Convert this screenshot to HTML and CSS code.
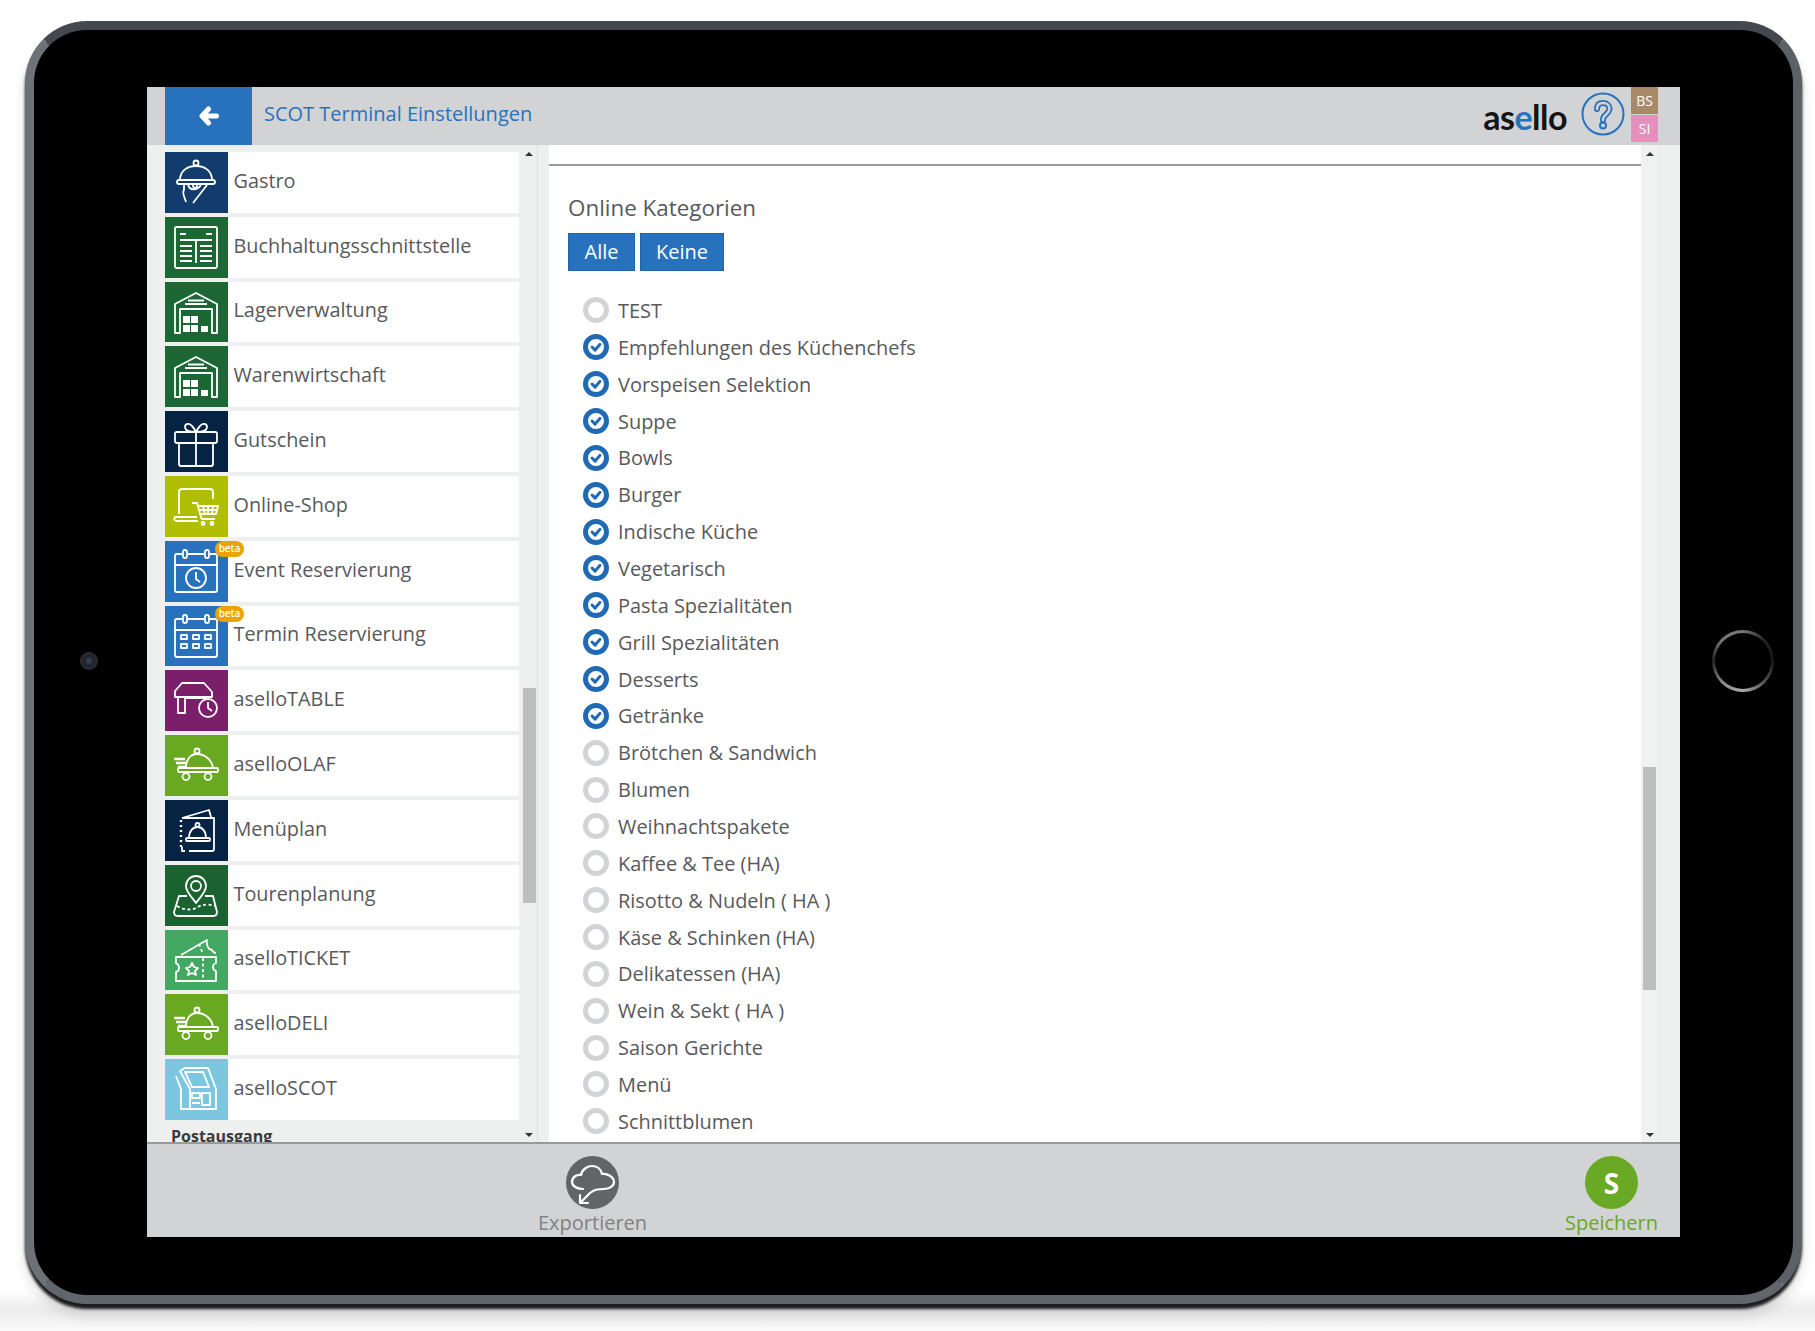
FILE: index.html
```html
<!DOCTYPE html>
<html lang="de">
<head>
  <meta charset="UTF-8" />
  <title>SCOT Terminal Einstellungen</title>
  <link rel="stylesheet" href="styles.css">
</head>
<body>

  <svg class="defs" width="0" height="0">
    <symbol id="warehouse" viewBox="0 0 63 61">
      <path d="M10 51V22L31 11L52 22V51H47V27H15V51Z" />
      <path d="M23 18.500H39M20 22H42" />
      <path class="solid" d="M18 34h7v7h-7zM26 34h7v7h-7zM18 43h7v7h-7zM26 43h7v7h-7zM36 44h7v6h-7z" />
    </symbol>
    <symbol id="delivery" viewBox="0 0 63 61">
      <circle cx="32" cy="16" r="2.500" />
      <path d="M21 33C21 25 25 19 32 19C40 19 47 25 48 33" />
      <rect x="13" y="33" width="40" height="4" rx="1" />
      <path d="M21 37V38M43 37V38" />
      <circle cx="21" cy="41.500" r="3.500" />
      <circle cx="43" cy="41.500" r="3.500" />
      <path class="thick" d="M9 24H20M11 28H21M13 32H21" />
    </symbol>
    <symbol id="calendar" viewBox="0 0 63 61">
      <path d="M17 13H12Q10 13 10 15V49Q10 51 12 51H50Q52 51 52 49V15Q52 13 50 13H45M23 13H39M10 24H52" />
      <rect x="18" y="9" width="4" height="8" rx="2" />
      <rect x="40" y="9" width="4" height="8" rx="2" />
    </symbol>
  </svg>

  <div class="tablet">
    <span class="camera"></span>
    <span class="home-button"></span>

    <div class="screen">
      <header class="topbar">
        <a class="back">
          <svg width="22" height="20" viewBox="0 0 22 20"><path d="M10.500 3L4 10L10.500 17M5 10H18.500" /></svg>
        </a>
        <div class="page-title">SCOT Terminal Einstellungen</div>
        <div class="logo">as<span class="logo-e">e</span>llo</div>
        <svg class="help" width="44" height="44" viewBox="0 0 44 44">
          <circle class="help-ring" cx="22" cy="22" r="20.500" />
          <path class="help-out" d="M16 17C16 12.500 18.500 11 22 11C26 11 28.500 13.500 28.500 16.500C28.500 19.500 26.500 21 25 22.500C23 24 22 25.500 22 28" />
          <path class="help-in" d="M16 17C16 12.500 18.500 11 22 11C26 11 28.500 13.500 28.500 16.500C28.500 19.500 26.500 21 25 22.500C23 24 22 25.500 22 28" />
          <circle class="help-dot" cx="22" cy="33.500" r="3" />
        </svg>
        <div class="users">
          <span class="user user-bs">BS</span>
          <span class="user user-si">SI</span>
        </div>
      </header>

      <div class="middle">
        <aside class="sidebar">
          <div class="menu">
            <div class="row">
              <span class="tile navy">
                <svg viewBox="0 0 63 61">
                  <circle cx="31" cy="11" r="2.500" />
                  <path d="M15 28C15 19 22 14 31 14C40 14 47 19 47 28" />
                  <rect x="12" y="28" width="38" height="4" rx="2" />
                  <path d="M19 32V38C17 40 19 44 20 47L21 50M42 33L28 51M23 32C24 39 32 39 36 33M28 33C28 37 32 37 32 33" />
                </svg>
              </span>
              Gastro
            </div>
            <div class="row">
              <span class="tile green">
                <svg viewBox="0 0 63 61">
                  <rect x="10" y="10" width="42" height="41" rx="1.500" />
                  <path d="M15 17H21M41 17H47M15 23H47M31 23V46M15 29H27M35 29H47M15 34H27M35 34H47M15 39H27M35 39H47M15 44H27M35 44H47" />
                </svg>
              </span>
              Buchhaltungsschnittstelle
            </div>
            <div class="row">
              <span class="tile green"><svg viewBox="0 0 63 61"><use href="#warehouse" /></svg></span>
              Lagerverwaltung
            </div>
            <div class="row">
              <span class="tile green"><svg viewBox="0 0 63 61"><use href="#warehouse" /></svg></span>
              Warenwirtschaft
            </div>
            <div class="row">
              <span class="tile midnight">
                <svg viewBox="0 0 63 61">
                  <rect x="10" y="21" width="42" height="11" rx="2" />
                  <path d="M14 32V53Q14 55 16 55H46Q48 55 48 53V32M31 21V55" />
                  <path d="M31 21C26 21 20 20 20 16C20 12 25 12 27 15C29 17 30 19 31 21C32 19 33 17 35 15C37 12 42 12 42 16C42 20 36 21 31 21Z" />
                </svg>
              </span>
              Gutschein
            </div>
            <div class="row">
              <span class="tile lime">
                <svg viewBox="0 0 63 61">
                  <path d="M14 38V16Q14 13 17 13H45Q48 13 48 16V23M32 41H11Q9 41 9.500 43.500Q10 45 12 45H33" />
                  <path d="M27 27H32L36 41Q36 43 38 43H50M33.500 30H53L51 38H36M38 30L40 38M43 30V38M48 30L47 38M35 34H52" />
                  <circle cx="38" cy="47.500" r="1.500" />
                  <circle cx="47" cy="47.500" r="1.500" />
                </svg>
              </span>
              Online-Shop
            </div>
            <div class="row">
              <span class="tile blue">
                <svg viewBox="0 0 63 61">
                  <use href="#calendar" />
                  <circle cx="31" cy="37" r="10" />
                  <path d="M31 31V38L35 41" />
                </svg>
              </span>
              Event Reservierung
              <span class="beta">beta</span>
            </div>
            <div class="row">
              <span class="tile blue">
                <svg viewBox="0 0 63 61">
                  <use href="#calendar" />
                  <path d="M16 29h6v4h-6zM28 29h6v4h-6zM40 29h6v4h-6zM16 38h6v4h-6zM28 38h6v4h-6zM40 38h6v4h-6z" />
                </svg>
              </span>
              Termin Reservierung
              <span class="beta">beta</span>
            </div>
            <div class="row">
              <span class="tile purple">
                <svg viewBox="0 0 63 61">
                  <path d="M17 13H39L47 22V27H10V21ZM13 27V43H20V28M20 28H41" />
                  <circle cx="43" cy="38" r="9" />
                  <path d="M43 32V38L47 41" />
                </svg>
              </span>
              aselloTABLE
            </div>
            <div class="row">
              <span class="tile grass"><svg viewBox="0 0 63 61"><use href="#delivery" /></svg></span>
              aselloOLAF
            </div>
            <div class="row">
              <span class="tile midnight">
                <svg viewBox="0 0 63 61">
                  <path d="M17 18H49V49Q49 51 47 51H24M20 51H17V47M17 18L44 10L46 17" />
                  <path d="M16 20v2M16 25v2M16 30v2M16 35v2M16 40v2M16 45v2" class="thick" />
                  <circle cx="32.500" cy="25" r="2" />
                  <path d="M24 38C24 31 28 27 32.500 27C37 27 41 31 41 38" />
                  <rect x="21" y="38" width="24" height="3" rx="1" />
                </svg>
              </span>
              Menüplan
            </div>
            <div class="row">
              <span class="tile forest">
                <svg viewBox="0 0 63 61">
                  <path d="M31 38C26 31 21 27 21 21A10 10 0 0 1 41 21C41 27 36 31 31 38Z" />
                  <circle cx="31" cy="21" r="5" />
                  <path d="M22 31H14L9 47Q9 51 13 51H48Q52 51 52 47L48 31H40" />
                  <path class="dash" d="M12 41C20 46 28 45 33 42C38 39 44 39 50 41" />
                </svg>
              </span>
              Tourenplanung
            </div>
            <div class="row">
              <span class="tile mint">
                <svg viewBox="0 0 63 61">
                  <path d="M11 27H51V33C47 34 47 40 51 41V51H11V42C15 41 15 35 11 33Z" />
                  <path d="M16 25L42 10C41 14 43 20 47 20C48 22 50 23 51 23" />
                  <path class="dash" d="M38 28V50M34 14L38 24" />
                  <path d="M27 33L29 37L33 38L30 41L31 45L27 43L23 45L24 41L21 38L25 37Z" />
                </svg>
              </span>
              aselloTICKET
            </div>
            <div class="row">
              <span class="tile grass"><svg viewBox="0 0 63 61"><use href="#delivery" /></svg></span>
              aselloDELI
            </div>
            <div class="row">
              <span class="tile sky">
                <svg viewBox="0 0 63 61">
                  <path d="M11 17L16 30V50H51V30L43 9H20L15 12L25 30V50" />
                  <path d="M20 13H38L44 28H27Z" />
                  <path d="M27 34h8v5h-8zM37 34h8v12h-8zM27 44H35" />
                </svg>
              </span>
              aselloSCOT
            </div>
            <div class="menu-section">Postausgang</div>
          </div>
          <div class="scroll menu-scroll">
            <span class="arrow-up"></span>
            <span class="thumb"></span>
            <span class="arrow-down"></span>
          </div>
        </aside>
        <div class="gutter"></div>

        <main class="main">
          <hr class="rule">
          <h2 class="section-title">Online Kategorien</h2>
          <div class="buttons">
            <button class="btn btn-all">Alle</button>
            <button class="btn">Keine</button>
          </div>
          <ul class="categories">
            <li><span class="radio"></span>TEST</li>
            <li><span class="radio checked"><svg viewBox="0 0 16 16"><path d="M3.500 8L7 11.500L12.500 5" /></svg></span>Empfehlungen des Küchenchefs</li>
            <li><span class="radio checked"><svg viewBox="0 0 16 16"><path d="M3.500 8L7 11.500L12.500 5" /></svg></span>Vorspeisen Selektion</li>
            <li><span class="radio checked"><svg viewBox="0 0 16 16"><path d="M3.500 8L7 11.500L12.500 5" /></svg></span>Suppe</li>
            <li><span class="radio checked"><svg viewBox="0 0 16 16"><path d="M3.500 8L7 11.500L12.500 5" /></svg></span>Bowls</li>
            <li><span class="radio checked"><svg viewBox="0 0 16 16"><path d="M3.500 8L7 11.500L12.500 5" /></svg></span>Burger</li>
            <li><span class="radio checked"><svg viewBox="0 0 16 16"><path d="M3.500 8L7 11.500L12.500 5" /></svg></span>Indische Küche</li>
            <li><span class="radio checked"><svg viewBox="0 0 16 16"><path d="M3.500 8L7 11.500L12.500 5" /></svg></span>Vegetarisch</li>
            <li><span class="radio checked"><svg viewBox="0 0 16 16"><path d="M3.500 8L7 11.500L12.500 5" /></svg></span>Pasta Spezialitäten</li>
            <li><span class="radio checked"><svg viewBox="0 0 16 16"><path d="M3.500 8L7 11.500L12.500 5" /></svg></span>Grill Spezialitäten</li>
            <li><span class="radio checked"><svg viewBox="0 0 16 16"><path d="M3.500 8L7 11.500L12.500 5" /></svg></span>Desserts</li>
            <li><span class="radio checked"><svg viewBox="0 0 16 16"><path d="M3.500 8L7 11.500L12.500 5" /></svg></span>Getränke</li>
            <li><span class="radio"></span>Brötchen &amp; Sandwich</li>
            <li><span class="radio"></span>Blumen</li>
            <li><span class="radio"></span>Weihnachtspakete</li>
            <li><span class="radio"></span>Kaffee &amp; Tee (HA)</li>
            <li><span class="radio"></span>Risotto &amp; Nudeln ( HA )</li>
            <li><span class="radio"></span>Käse &amp; Schinken (HA)</li>
            <li><span class="radio"></span>Delikatessen (HA)</li>
            <li><span class="radio"></span>Wein &amp; Sekt ( HA )</li>
            <li><span class="radio"></span>Saison Gerichte</li>
            <li><span class="radio"></span>Menü</li>
            <li><span class="radio"></span>Schnittblumen</li>
          </ul>
        </main>
        <div class="scroll main-scroll">
          <span class="arrow-up"></span>
          <span class="thumb"></span>
          <span class="arrow-down"></span>
        </div>
      </div>

      <footer class="footer">
        <div class="action action-export">
          <span class="action-icon">
            <svg viewBox="0 0 53 53">
              <path d="M17 33C11 33 6 30 6 26C6 21 11 18 15 19C16 13 22 10 26 10C31 10 35 13 36 18C41 17 48 21 48 26C48 31 42 33 38 33C33 33 29 33 24 37L15 46" />
              <path d="M14 39V47H22" />
            </svg>
          </span>
          Exportieren
        </div>
        <div class="action action-save">
          <span class="action-icon">S</span>
          Speichern
        </div>
      </footer>
    </div>
  </div>

</body>
</html>
```

FILE: styles.css
```css
* {
  box-sizing: border-box;
}
body {
  margin: 0;
  height: 1331px;
  overflow: hidden;
  background: linear-gradient(to bottom, #fff 0, #fff 1290px, #ececec 1310px, #fafafa 1331px);
  font-family: "Open Sans", sans-serif;
  color: #58595b;
}
.defs {
  display: block;
}
.tablet {
  position: relative;
  display: flex;
  width: 1777px;
  height: 1283px;
  margin: 21px 0 0 25px;
  padding: 57px 112px 55px 113px;
  background: #000;
  border: 9px solid #5c6167;
  border-top-color: #45494f;
  border-left-color: #6c7278;
  border-bottom-color: #61666d;
  border-radius: 62px;
  box-shadow: 0 5px 3px #1c1c1c, 0 12px 14px rgba(0,0,0,0.12);
}
.camera {
  position: absolute;
  left: 46px;
  top: 622px;
  width: 18px;
  height: 18px;
  border-radius: 50%;
  background: radial-gradient(circle, #3a4a66 0, #1e2126 40%, #303134 75%, #111 100%);
}
.home-button {
  position: absolute;
  left: 1678px;
  top: 600px;
  width: 62px;
  height: 62px;
  border-radius: 50%;
  background: conic-gradient(#777, #222 45deg, #151515 90deg, #555 135deg, #aaa 180deg, #888 225deg, #222 270deg, #777 315deg, #777);
}
.home-button::after {
  content: "";
  display: block;
  width: 56px;
  height: 56px;
  margin: 3px;
  border-radius: 50%;
  background: #000;
}
.screen {
  display: flex;
  flex-direction: column;
  width: 1533px;
  height: 1150px;
  overflow: hidden;
  background: #d2d3d5;
}

/* top bar */
.topbar {
  display: flex;
  align-items: flex-start;
  flex: none;
  height: 58px;
  padding: 0 22px 0 18px;
  background: #d2d3d5;
}
.back {
  display: flex;
  align-items: center;
  justify-content: center;
  width: 87px;
  height: 58px;
  background: #2872bd;
}
.back svg path {
  fill: none;
  stroke: #fff;
  stroke-width: 5;
  stroke-linejoin: round;
  stroke-linecap: round;
}
.page-title {
  margin-left: 12px;
  line-height: 54px;
  font-size: 20px;
  color: #2872bd;
}
.logo {
  margin-left: auto;
  font-family: Lato, sans-serif;
  font-weight: 700;
  font-size: 34px;
  line-height: 60px;
  color: #151515;
  letter-spacing: -0.5px;
}
.logo-e {
  color: #2872bd;
}
.help {
  margin: 5px 6px 0 14px;
  fill: none;
}
.help-ring {
  stroke: #2872bd;
  stroke-width: 2;
}
.help-out {
  stroke: #2872bd;
  stroke-width: 6;
  stroke-linecap: round;
}
.help-in {
  stroke: #d2d3d5;
  stroke-width: 2.500;
  stroke-linecap: round;
}
.help-dot {
  stroke: #2872bd;
  stroke-width: 2;
}
.users {
  display: flex;
  flex-direction: column;
  gap: 1px;
}
.user {
  width: 27px;
  height: 27px;
  line-height: 27px;
  text-align: center;
  font-size: 14px;
  color: #fff;
}
.user-bs {
  background: #a98a68;
}
.user-si {
  background: #e58fbd;
}

/* middle part */
.middle {
  display: flex;
  flex: none;
  height: 997px;
  overflow: hidden;
}
.sidebar {
  display: flex;
  width: 391px;
  padding-left: 18px;
  background: #eef0ef;
  border-right: 1px solid #dcdedd;
}
.menu {
  width: 354px;
  padding-top: 7px;
}
.row {
  position: relative;
  display: flex;
  align-items: center;
  gap: 5.500px;
  height: 60.8px;
  padding-bottom: 4px;
  margin-bottom: 4px;
  background: #fff;
  font-size: 19.850px;
}
.tile {
  flex: none;
  width: 63px;
  height: 60.8px;
  margin-bottom: -4px;
}
.tile svg {
  display: block;
  width: 63px;
  height: 61px;
}
svg path, svg circle, svg rect {
  fill: none;
}
.tile svg, .defs symbol {
  stroke: #fff;
  stroke-width: 1.800;
  stroke-linejoin: round;
}
.defs .solid {
  fill: #fff;
  stroke: none;
}
.thick {
  stroke-width: 2.400;
}
.dash {
  stroke-dasharray: 3 2.500;
}
.navy { background: #123c6e; }
.green { background: #1d6734; }
.midnight { background: #062344; }
.lime { background: #afbe00; }
.blue { background: #2872bd; }
.purple { background: #7b1f6a; }
.grass { background: #69a922; }
.forest { background: #1a622f; }
.mint { background: #43a862; }
.sky { background: #7cc7df; }
.beta {
  position: absolute;
  left: 50px;
  top: 0;
  width: 29px;
  height: 16px;
  line-height: 14px;
  border-radius: 8px;
  background: #eba300;
  color: #fff;
  text-align: center;
  font-size: 10px;
  font-weight: 600;
}
.menu-section {
  padding: 0 0 0 6px;
  line-height: 24px;
  font-size: 16px;
  font-weight: 700;
  color: #3a3a3c;
}
.scroll {
  position: relative;
  display: flex;
  flex-direction: column;
  align-items: center;
  padding: 7px 0 5px;
}
.menu-scroll {
  width: 18px;
  padding-left: 2px;
}
.arrow-up, .arrow-down {
  display: block;
  width: 0;
  height: 0;
  border-left: 4px solid transparent;
  border-right: 4px solid transparent;
}
.arrow-up {
  border-bottom: 4px solid #333;
}
.arrow-down {
  border-top: 4px solid #333;
  margin-top: auto;
}
.thumb {
  display: block;
  width: 13px;
  background: #bdbdbd;
}
.menu-scroll .thumb {
  height: 215px;
  margin-top: 532px;
}
.gutter {
  width: 11px;
  background: #eef0ef;
}

/* main part */
.main {
  width: 1092px;
  padding: 19px 0 0;
  background: #fff;
}
.rule {
  height: 2px;
  margin: 0;
  border: none;
  background: #97999a;
}
.section-title {
  margin: 27px 0 0 19px;
  font-size: 22.400px;
  line-height: 30px;
  font-weight: 400;
}
.buttons {
  display: flex;
  gap: 5px;
  margin: 10px 0 0 19px;
}
.btn {
  height: 38px;
  padding: 0 15px 2px;
  border: 1px solid #1d65ad;
  background: #2872bd;
  color: #fff;
  font-family: inherit;
  font-size: 20px;
}
.btn-all {
  width: 67px;
}
.categories {
  margin: 21px 0 0;
  padding: 0 0 0 34px;
  list-style: none;
}
.categories li {
  display: flex;
  align-items: center;
  gap: 9px;
  height: 36.860px;
  font-size: 19.950px;
}
.radio {
  flex: none;
  width: 26px;
  height: 26px;
  border: 5px solid #d2d3d5;
  border-radius: 50%;
}
.radio.checked {
  display: flex;
  align-items: center;
  justify-content: center;
  border-color: #2069b4;
}
.radio svg {
  flex: none;
  width: 14px;
  height: 14px;
}
.radio svg path {
  stroke: #2069b4;
  stroke-width: 3.500;
  stroke-linecap: round;
  stroke-linejoin: round;
}
.main-scroll {
  width: 39px;
  align-items: flex-start;
  padding-left: 2px;
  background: linear-gradient(to right, #f1f1f1 17px, #eef0ef 17px);
}
.main-scroll .arrow-up, .main-scroll .arrow-down {
  margin-left: 3px;
}
.main-scroll .thumb {
  height: 223px;
  margin-top: 611px;
}
.main-scroll .arrow-down {
  margin-top: auto;
}

/* footer */
.footer {
  display: flex;
  flex: none;
  justify-content: space-between;
  height: 95px;
  padding: 12px 22px 0 391px;
  border-top: 2px solid #97999a;
}
.action {
  display: flex;
  flex-direction: column;
  align-items: center;
  font-size: 20px;
  line-height: 28px;
}
.action-icon {
  display: flex;
  align-items: center;
  justify-content: center;
  width: 53px;
  height: 53px;
  border-radius: 50%;
  color: #fff;
  font-size: 28px;
  font-weight: 700;
}
.action-export {
  color: #808285;
}
.action-export .action-icon {
  background: #636466;
}
.action-export svg {
  width: 53px;
  height: 53px;
}
.action-export svg path {
  stroke: #fff;
  stroke-width: 2.200;
  stroke-linecap: round;
  stroke-linejoin: round;
}
.action-save {
  color: #6aa925;
}
.action-save .action-icon {
  background: #6aa925;
}
```
